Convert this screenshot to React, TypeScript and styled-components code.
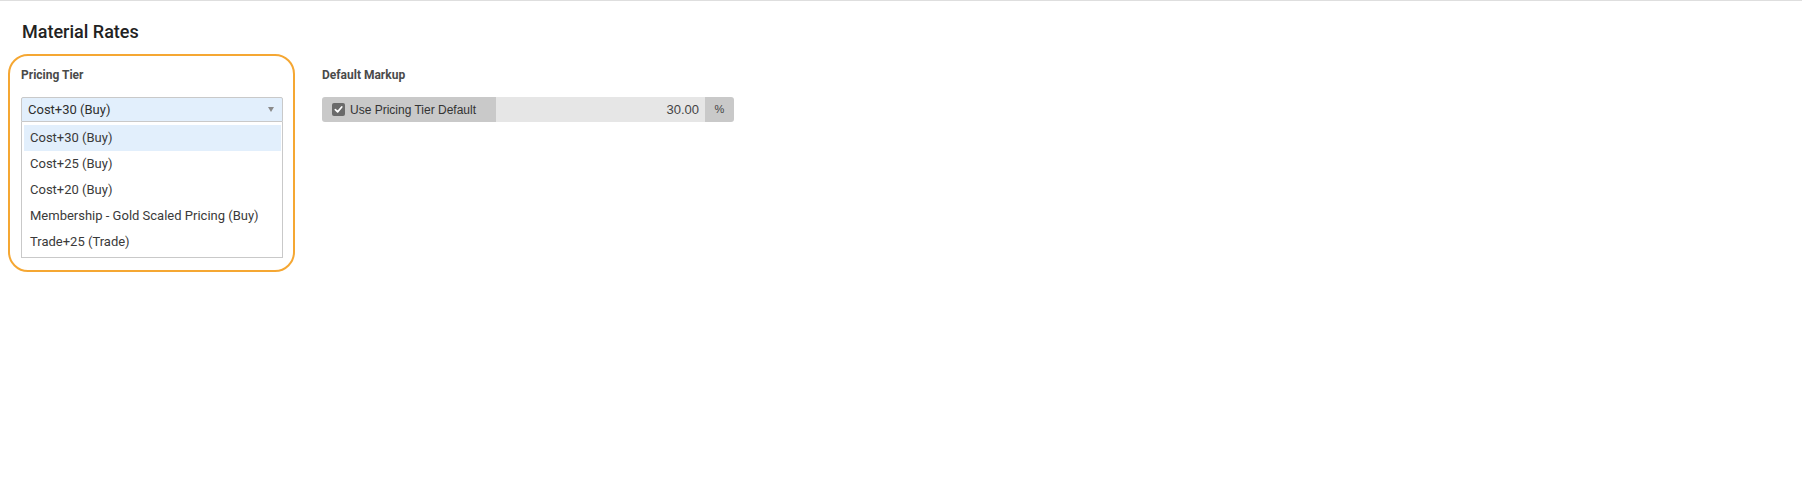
import React from 'react';
import styled, { createGlobalStyle } from 'styled-components';

const GlobalStyle = createGlobalStyle`
  html, body {
    margin: 0;
    padding: 0;
    background: #ffffff;
    font-family: Roboto, "Liberation Sans", Arial, sans-serif;
    color: #333;
  }
`;

const tiers = [
  'Cost+30 (Buy)',
  'Cost+25 (Buy)',
  'Cost+20 (Buy)',
  'Membership - Gold Scaled Pricing (Buy)',
  'Trade+25 (Trade)',
];

const Page = styled.div`
  border-top: 1px solid #dedede;
  min-height: 497px;
`;

const Title = styled.h2`
  margin: 0;
  padding: 20px 0 0 22px;
  font-size: 18px;
  font-weight: 500;
  line-height: 21px;
  color: #222;
`;

const FieldRow = styled.div`
  display: flex;
  align-items: flex-start;
  gap: 14px;
  padding: 12px 0 0 8px;
`;

const FieldGroup = styled.div<{ $highlighted?: boolean; $width: number }>`
  width: ${p => p.$width}px;
  box-sizing: border-box;
  border: 2px solid ${p => (p.$highlighted ? '#f5a733' : 'transparent')};
  border-radius: 20px;
  padding: 12px 10px 12px 11px;
  display: flex;
  flex-direction: column;
`;

const Label = styled.label`
  font-size: 12px;
  font-weight: 700;
  line-height: 14px;
  color: #4a4a4a;
  margin-bottom: 15px;
`;

const SelectBox = styled.div`
  position: relative;
  height: 25px;
  box-sizing: border-box;
  border: 1px solid #c9c9c9;
  border-radius: 2px 2px 0 0;
  background: #e2effc;
  font-size: 13px;
  line-height: 23px;
  padding: 0 6px;
  color: #2f2f2f;
`;

const Caret = styled.span`
  position: absolute;
  right: 8px;
  top: 9px;
  width: 0;
  height: 0;
  border-left: 3.5px solid transparent;
  border-right: 3.5px solid transparent;
  border-top: 5px solid #8a8a8a;
`;

const OptionList = styled.ul`
  list-style: none;
  margin: 0;
  padding: 3px 1px 2px 2px;
  border: 1px solid #c9c9c9;
  border-top: none;
  background: #fff;
`;

const Option = styled.li<{ $active?: boolean }>`
  height: 26px;
  line-height: 26px;
  padding: 0 6px;
  font-size: 13px;
  color: #3a3a3a;
  background: ${p => (p.$active ? '#e2effc' : 'transparent')};
`;

const InputGroup = styled.div`
  display: flex;
  height: 25px;
  border-radius: 3px;
  overflow: hidden;
  font-family: "Liberation Sans", Arial, sans-serif;
  color: #333;
`;

const CheckAddon = styled.div`
  width: 174px;
  display: flex;
  align-items: center;
  gap: 5px;
  padding-left: 10px;
  box-sizing: border-box;
  background: #c9c9c9;
  font-size: 12px;
`;

const CheckBox = styled.span`
  width: 13px;
  height: 13px;
  border-radius: 2px;
  background: #6a6a6a;
  display: flex;
  align-items: center;
  justify-content: center;
`;

const NumberInput = styled.div`
  flex: 1;
  background: #e6e6e6;
  text-align: right;
  padding-right: 6px;
  font-size: 13px;
  line-height: 25px;
  color: #444;
`;

const UnitAddon = styled.div`
  width: 29px;
  background: #c9c9c9;
  text-align: center;
  font-size: 11px;
  line-height: 25px;
  color: #444;
`;

export default function App() {
  return (
    <Page>
      <GlobalStyle />
      <Title>Material Rates</Title>
      <FieldRow>
        <FieldGroup $highlighted $width={287}>
          <Label>Pricing Tier</Label>
          <SelectBox>
            {tiers[0]}
            <Caret />
          </SelectBox>
          <OptionList>
            {tiers.map((t, i) => (
              <Option key={t} $active={i === 0}>
                {t}
              </Option>
            ))}
          </OptionList>
        </FieldGroup>
        <FieldGroup $width={437}>
          <Label>Default Markup</Label>
          <InputGroup>
            <CheckAddon>
              <CheckBox>
                <svg width="9" height="9" viewBox="0 0 10 10" fill="none">
                  <path d="M1.5 5.2L4 7.6L8.6 2.2" stroke="#fff" strokeWidth="1.9" strokeLinecap="round" strokeLinejoin="round" />
                </svg>
              </CheckBox>
              Use Pricing Tier Default
            </CheckAddon>
            <NumberInput>30.00</NumberInput>
            <UnitAddon>%</UnitAddon>
          </InputGroup>
        </FieldGroup>
      </FieldRow>
    </Page>
  );
}
